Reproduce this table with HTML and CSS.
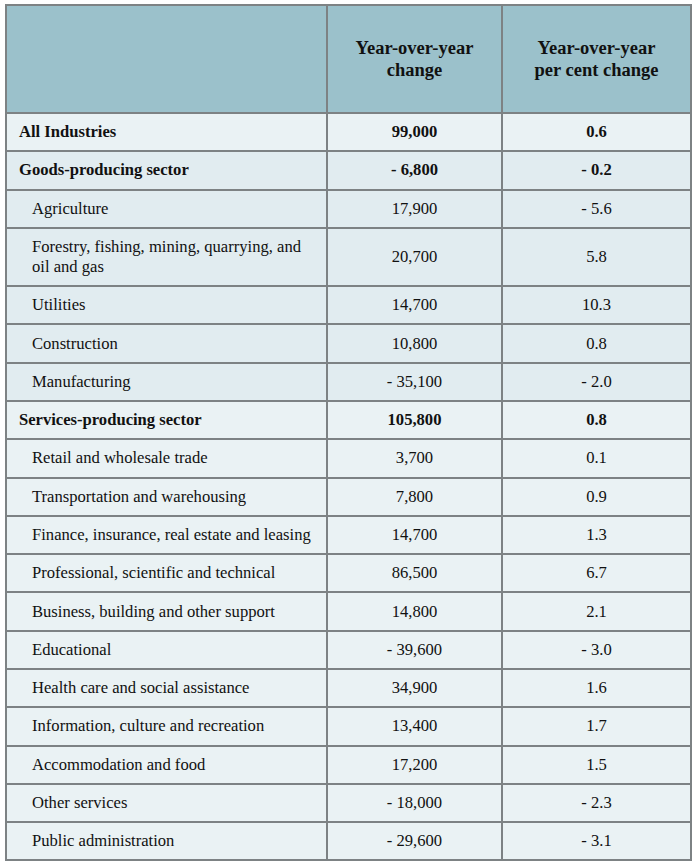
FILE: index.html
```html
<!DOCTYPE html>
<html>
<head>
<meta charset="utf-8">
<link rel="stylesheet" href="styles.css">
</head>
<body>
<table class="data">
  <colgroup>
    <col class="c1"><col class="c2"><col class="c3">
  </colgroup>
  <thead>
    <tr>
      <th></th>
      <th>Year-over-year<br>change</th>
      <th>Year-over-year<br>per cent change</th>
    </tr>
  </thead>
  <tbody>
    <tr class="light bold"><td class="lbl">All Industries</td><td>99,000</td><td>0.6</td></tr>
    <tr class="dark bold"><td class="lbl">Goods-producing sector</td><td>- 6,800</td><td>- 0.2</td></tr>
    <tr class="dark"><td class="lbl sub">Agriculture</td><td>17,900</td><td>- 5.6</td></tr>
    <tr class="dark"><td class="lbl sub">Forestry, fishing, mining, quarrying, and<br>oil and gas</td><td>20,700</td><td>5.8</td></tr>
    <tr class="dark"><td class="lbl sub">Utilities</td><td>14,700</td><td>10.3</td></tr>
    <tr class="dark"><td class="lbl sub">Construction</td><td>10,800</td><td>0.8</td></tr>
    <tr class="dark"><td class="lbl sub">Manufacturing</td><td>- 35,100</td><td>- 2.0</td></tr>
    <tr class="light bold"><td class="lbl">Services-producing sector</td><td>105,800</td><td>0.8</td></tr>
    <tr class="light"><td class="lbl sub">Retail and wholesale trade</td><td>3,700</td><td>0.1</td></tr>
    <tr class="light"><td class="lbl sub">Transportation and warehousing</td><td>7,800</td><td>0.9</td></tr>
    <tr class="light"><td class="lbl sub">Finance, insurance, real estate and leasing</td><td>14,700</td><td>1.3</td></tr>
    <tr class="light"><td class="lbl sub">Professional, scientific and technical</td><td>86,500</td><td>6.7</td></tr>
    <tr class="light"><td class="lbl sub">Business, building and other support</td><td>14,800</td><td>2.1</td></tr>
    <tr class="light"><td class="lbl sub">Educational</td><td>- 39,600</td><td>- 3.0</td></tr>
    <tr class="light"><td class="lbl sub">Health care and social assistance</td><td>34,900</td><td>1.6</td></tr>
    <tr class="light"><td class="lbl sub">Information, culture and recreation</td><td>13,400</td><td>1.7</td></tr>
    <tr class="light"><td class="lbl sub">Accommodation and food</td><td>17,200</td><td>1.5</td></tr>
    <tr class="light"><td class="lbl sub">Other services</td><td>- 18,000</td><td>- 2.3</td></tr>
    <tr class="light"><td class="lbl sub">Public administration</td><td>- 29,600</td><td>- 3.1</td></tr>
  </tbody>
</table>
</body>
</html>
```
FILE: styles.css
```css
html, body {
  margin: 0;
  padding: 0;
  background: #ffffff;
}
body {
  padding: 4px 0 0 5px;
  font-family: "Liberation Serif", "DejaVu Serif", serif;
  color: #111111;
}
.data {
  border-collapse: collapse;
  width: 685px;
  table-layout: fixed;
  border: 2px solid #7d8284;
}
.c1 { width: 321px; }
.c2 { width: 175px; }
.c3 { width: 189px; }
.data th {
  background: #9bc1cb;
  height: 106px;
  font-size: 18.5px;
  line-height: 22px;
  font-weight: bold;
  text-align: center;
  vertical-align: middle;
  border: 2px solid #7d8284;
  padding: 0 8px;
}
.data td {
  border: 2px solid #7d8284;
  padding: 8.15px 10px;
  font-size: 16.6px;
  line-height: 20px;
  text-align: center;
  vertical-align: middle;
}
.data td.lbl {
  text-align: left;
  padding-left: 12px;
}
.data td.sub {
  padding-left: 25px;
}
.light td { background: #eaf2f4; }
.dark td { background: #e1ecf0; }
.bold td { font-weight: bold; }
```
